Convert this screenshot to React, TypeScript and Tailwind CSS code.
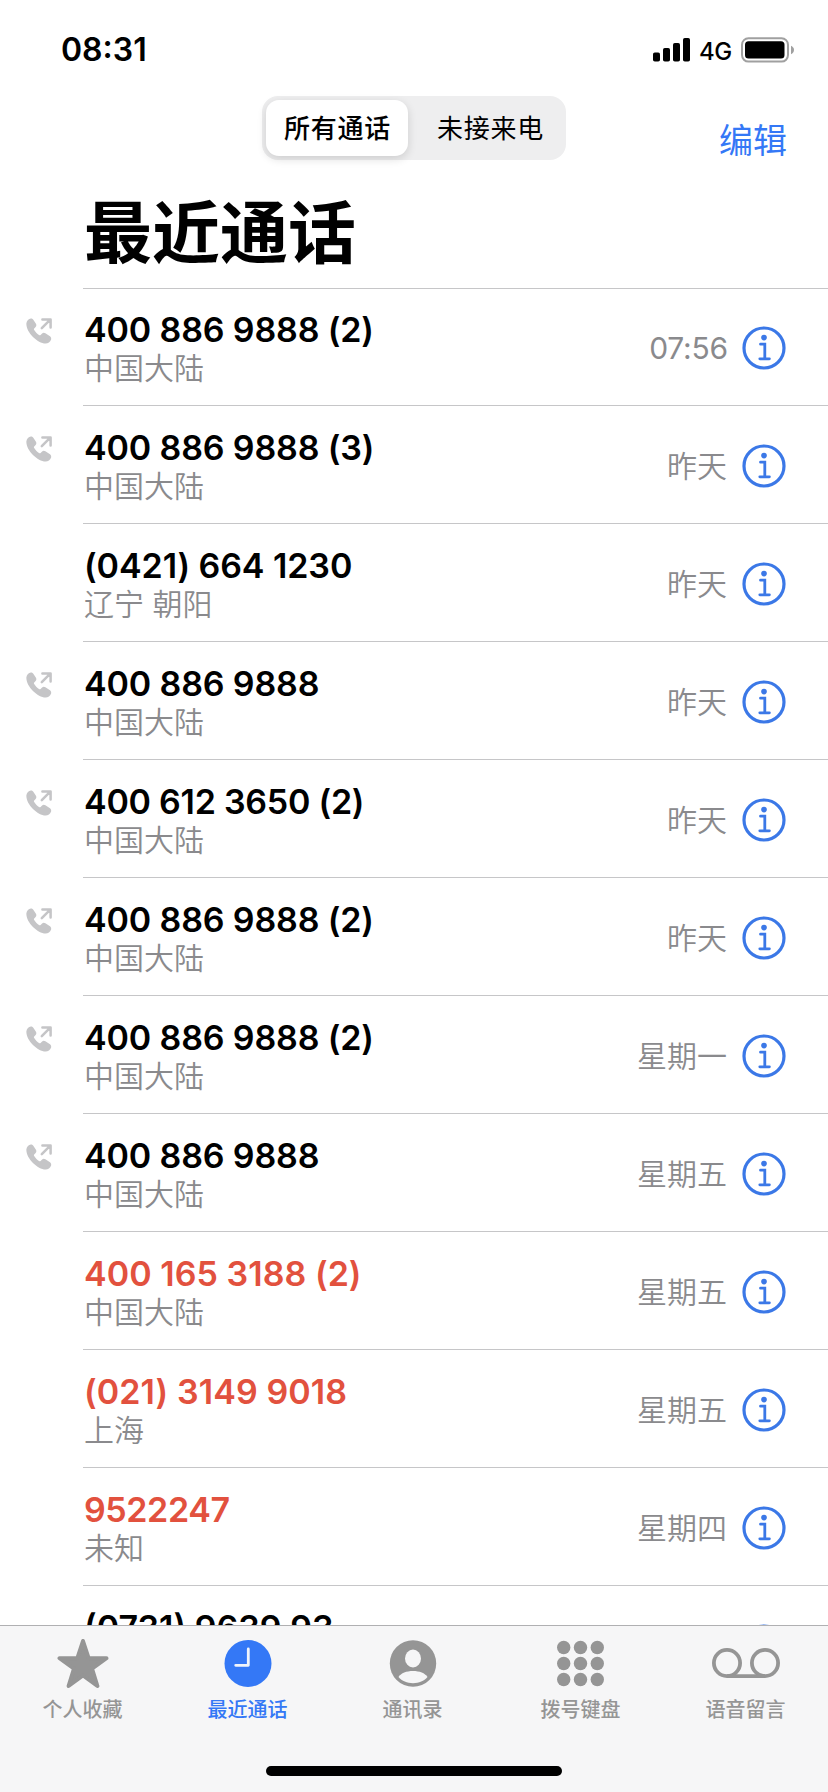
import { ReactNode } from 'react';
import clsx from 'clsx';

type Call = {
    number: string;
    place: string;
    time: string;
    tracking: string;
    outgoing?: boolean;
    missed?: boolean;
};

const calls: Call[] = [
    { number: '400 886 9888 (2)', place: '中国大陆', time: '07:56', tracking: 'tracking-[-0.14px]', outgoing: true },
    { number: '400 886 9888 (3)', place: '中国大陆', time: '昨天', tracking: 'tracking-[-0.14px]', outgoing: true },
    { number: '(0421) 664 1230', place: '辽宁 朝阳', time: '昨天', tracking: 'tracking-[-0.07px]' },
    { number: '400 886 9888', place: '中国大陆', time: '昨天', tracking: 'tracking-[-0.14px]', outgoing: true },
    { number: '400 612 3650 (2)', place: '中国大陆', time: '昨天', tracking: 'tracking-[-0.25px]', outgoing: true },
    { number: '400 886 9888 (2)', place: '中国大陆', time: '昨天', tracking: 'tracking-[-0.14px]', outgoing: true },
    { number: '400 886 9888 (2)', place: '中国大陆', time: '星期一', tracking: 'tracking-[-0.14px]', outgoing: true },
    { number: '400 886 9888', place: '中国大陆', time: '星期五', tracking: 'tracking-[-0.14px]', outgoing: true },
    { number: '400 165 3188 (2)', place: '中国大陆', time: '星期五', tracking: 'tracking-[0.05px]', missed: true },
    { number: '(021) 3149 9018', place: '上海', time: '星期五', tracking: 'tracking-[0.1px]', missed: true },
    { number: '9522247', place: '未知', time: '星期四', tracking: 'tracking-[-0.4px]', missed: true },
    { number: '(0731) 9639 93', place: '', time: '', tracking: 'tracking-normal' },
];

function OutgoingIcon() {
    return (
        <svg width="26" height="26" viewBox="0 0 26 26" fill="none">
            <path
                d="M0.4 5.2C0.7 2.600 2.800 0.400 4.800 0.400c1.100 0 1.900.5 2.500 1.400l2.500 3.800c.8 1.200.7 2.400-.2 3.300L8.200 10.400c-.4.5-.4 1 0 1.600 1 1.700 2.900 3.700 4.800 5 .6.4 1.100.4 1.600-.1l1.500-1.400c.9-.9 2.100-1 3.300-.2l4.200 2.800c1.400.9 1.900 2.200 1.400 3.600-.8 2.300-2.900 3.900-5.400 3.900C11.400 25.600-.4 13.800.4 5.200z"
                fill="#c5c5c7"
            />
            <path d="M15.800 10.200L24 1.900M16.400 1.400h8.200v8" stroke="#c5c5c7" strokeWidth="2.500" strokeLinecap="round" strokeLinejoin="round" />
        </svg>
    );
}

function InfoIcon() {
    return (
        <svg width="44" height="44" viewBox="0 0 44 44" fill="none" stroke="#3b78e7">
            <circle cx="22" cy="22" r="20" strokeWidth="3.200" />
            <circle cx="22" cy="11.600" r="2.800" fill="#3b78e7" stroke="none" />
            <path d="M18.500 18.200h4.300v14.300M17.800 32.800h9.600" strokeWidth="2.800" strokeLinecap="round" />
        </svg>
    );
}

function StatusBar() {
    return (
        <div className="flex h-[96px] items-center justify-between pt-[4px] pr-[34px] pl-[61px]">
            <span className="text-[32px] leading-none font-semibold">08:31</span>
            <div className="flex items-center">
                <svg width="37" height="24" viewBox="0 0 37 24">
                    <rect x="0" y="14.500" width="7" height="9" rx="1.800" />
                    <rect x="10" y="10" width="7" height="13.500" rx="1.800" />
                    <rect x="20" y="5" width="7" height="18.500" rx="1.800" />
                    <rect x="30" y="0" width="7" height="23.500" rx="1.800" />
                </svg>
                <span className="ml-[9px] w-[42px] pt-[3px] text-[24px] leading-none font-medium tracking-[-0.5px]">4G</span>
                <svg width="53" height="26" viewBox="0 0 53 26">
                    <rect x="1" y="1.200" width="46" height="23.400" rx="6.500" fill="none" stroke="#a0a0a0" strokeWidth="2" />
                    <rect x="4" y="4.200" width="39.500" height="17.400" rx="3.500" />
                    <path d="M50 8.800c1.800.8 3 2.300 3 4.200s-1.200 3.400-3 4.200z" fill="#a0a0a0" />
                </svg>
            </div>
        </div>
    );
}

function Header() {
    return (
        <div className="grid h-[64px] grid-cols-[1fr_304px_1fr]">
            <div />
            <div className="flex rounded-[16px] bg-[#eeeeef] p-1 text-[26px] leading-none tracking-[0.8px]">
                <button className="h-14 w-[142px] rounded-[13px] bg-white pt-px pl-px font-medium shadow-[0_3px_10px_rgba(0,0,0,0.14)]">所有通话</button>
                <button className="h-14 flex-1 pt-px pl-[11px]">未接来电</button>
            </div>
            <div className="flex justify-end pt-[28px] pr-[41px]">
                <button className="h-[34px] text-[34px] leading-none text-[#3478f6]">编辑</button>
            </div>
        </div>
    );
}

function CallRow({ call }: { call: Call }) {
    const isClock = call.time.includes(':');

    return (
        <li className="flex h-[118px] shrink-0">
            <div className="w-[83px] pt-[30px] pl-[26px]">{call.outgoing && <OutgoingIcon />}</div>
            <div className="flex flex-1 justify-between border-b border-[#c6c6c8] pr-[42px] pl-px">
                <div className="pt-[22px]">
                    <p className={clsx('text-[34px] leading-[40px] font-semibold whitespace-nowrap', call.tracking, call.missed ? 'text-[#e2513e]' : 'text-black')}>{call.number}</p>
                    <p className="text-[30px] leading-[36px] font-[350] text-[#8a8a8d]">{call.place}</p>
                </div>
                <div className="flex items-center pt-[2px]">
                    <span className={clsx('pt-[2px] text-[30px] text-[#8a8a8d]', isClock ? 'mr-[14px] font-normal tracking-[-0.2px]' : 'mr-[15px] font-[350]')}>{call.time}</span>
                    <InfoIcon />
                </div>
            </div>
        </li>
    );
}

function Tab({ label, active, className, children }: { label: string; active?: boolean; className?: string; children: ReactNode }) {
    return (
        <button className={clsx('flex flex-1 flex-col items-center', active ? 'text-[#3478f6]' : 'text-[#959595]', className)}>
            <span className="flex h-[54px] items-center">{children}</span>
            <span className="mt-[6px] text-[20px] leading-[26px] font-medium">{label}</span>
        </button>
    );
}

function TabBar() {
    return (
        <nav className="flex h-[167px] shrink-0 flex-col border-t border-[#b0b0b2] bg-[#f6f6f7]">
            <div className="flex h-[140px] pt-[11px]">
                <Tab label="个人收藏">
                    <svg width="52" height="50" viewBox="0 0 52 50" fill="currentColor" stroke="currentColor" strokeWidth="4" strokeLinejoin="round">
                        <path d="M26 2l5.600 17.200H49.500L35 29.700l5.400 17.300L26 36.500 11.600 47 17 29.700 2.500 19.200h17.900z" />
                    </svg>
                </Tab>
                <Tab label="最近通话" active>
                    <svg width="48" height="48" viewBox="0 0 48 48">
                        <circle cx="24" cy="23.500" r="23.500" fill="currentColor" />
                        <path d="M24.300 9v16.300H11.700" fill="none" stroke="#f0f4fb" strokeWidth="2.800" strokeLinecap="round" strokeLinejoin="round" />
                    </svg>
                </Tab>
                <Tab label="通讯录" className="pr-[3px]">
                    <svg width="48" height="48" viewBox="0 0 48 48">
                        <circle cx="24" cy="23.500" r="23.200" fill="currentColor" />
                        <ellipse cx="24" cy="18.500" rx="8" ry="9" fill="#f6f6f7" />
                        <path d="M9.500 37C12 33 17.500 31 24 31s12 2 14.500 6C35 41 30 43.200 24 43.200S13 41 9.500 37z" fill="#f6f6f7" />
                    </svg>
                </Tab>
                <Tab label="拨号键盘">
                    <svg width="48" height="48" viewBox="0 0 48 48" fill="currentColor">
                        {[7.5, 23.5, 39.5].map((y) => [6.7, 23.5, 40.3].map((x) => <circle key={`${x}-${y}`} cx={x} cy={y} r="6.700" />))}
                    </svg>
                </Tab>
                <Tab label="语音留言">
                    <svg width="70" height="32" viewBox="0 0 70 32" fill="none" stroke="currentColor" strokeWidth="3.800">
                        <circle cx="16" cy="15" r="13.100" />
                        <circle cx="54" cy="15" r="13.100" />
                        <path d="M16 28.100h38" />
                    </svg>
                </Tab>
            </div>
            <div className="mx-auto h-[10px] w-[296px] rounded-full bg-black" />
        </nav>
    );
}

export default function App() {
    return (
        <div className="flex h-[1792px] w-[828px] flex-col overflow-hidden bg-white font-[Inter,'Noto_Sans_CJK_SC',sans-serif] text-black">
            <StatusBar />
            <Header />
            <h1 className="h-[128px] pt-[33px] pl-[84px] text-[68px] leading-[80px] font-bold">最近通话</h1>
            <div className="min-h-0 flex-1 overflow-hidden">
                <div className="ml-[83px] h-px bg-[#c6c6c8]" />
                <ul className="-mt-px flex flex-col">
                    {calls.map((call, i) => (
                        <CallRow key={i} call={call} />
                    ))}
                </ul>
            </div>
            <TabBar />
        </div>
    );
}
